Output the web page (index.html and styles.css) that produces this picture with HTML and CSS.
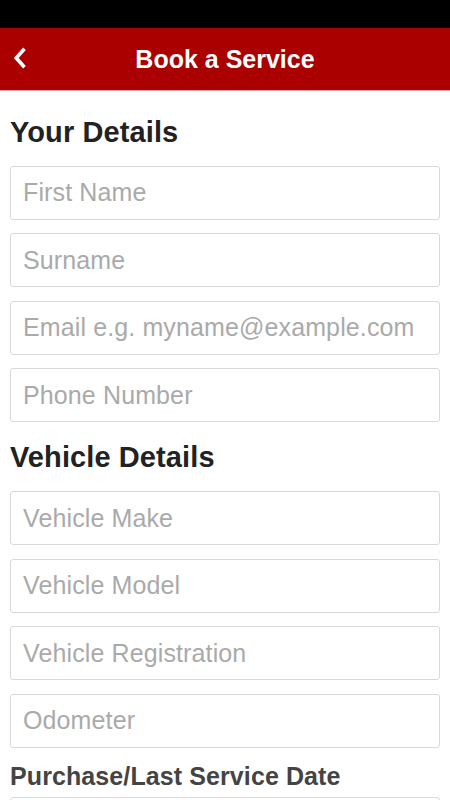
FILE: index.html
```html
<!DOCTYPE html>
<html lang="en">
<head>
<meta charset="utf-8">
<title>Book a Service</title>
<link rel="stylesheet" href="styles.css">
</head>
<body>
<div class="status-bar"></div>
<header class="app-header">
  <button class="back-btn" aria-label="Back">
    <svg width="14" height="22" viewBox="0 0 14 22"><path d="M11.5 1.8 L3.2 11 L11.5 20.2" fill="none" stroke="#fff" stroke-width="3.6" stroke-linejoin="miter"/></svg>
  </button>
  <h1 class="app-title">Book a Service</h1>
</header>
<main class="form">
  <h2 class="section-title">Your Details</h2>
  <input class="field" type="text" placeholder="First Name">
  <input class="field" type="text" placeholder="Surname">
  <input class="field" type="email" placeholder="Email e.g. myname@example.com">
  <input class="field" type="tel" placeholder="Phone Number">
  <h2 class="section-title">Vehicle Details</h2>
  <input class="field" type="text" placeholder="Vehicle Make">
  <input class="field" type="text" placeholder="Vehicle Model">
  <input class="field" type="text" placeholder="Vehicle Registration">
  <input class="field" type="text" placeholder="Odometer">
  <h3 class="label">Purchase/Last Service Date</h3>
  <input class="field" type="text" placeholder="">
</main>
</body>
</html>
```
FILE: styles.css
```css
html, body {
  margin: 0;
  padding: 0;
  background: #fff;
  font-family: "Liberation Sans", Arial, sans-serif;
  overflow: hidden;
}
.status-bar {
  height: 28px;
  background: #000;
}
.app-header {
  position: relative;
  height: 62px;
  background: #aa0000;
  border-bottom: 1px solid #d9a3a3;
  display: flex;
  align-items: center;
  justify-content: center;
}
.back-btn {
  position: absolute;
  left: 13px;
  top: 19px;
  padding: 0;
  border: 0;
  background: none;
  width: 14px;
  height: 22px;
  display: block;
}
.back-btn svg { display: block; }
.app-title {
  margin: 0;
  color: #fff;
  font-size: 25px;
  font-weight: bold;
  line-height: 30px;
}
.form {
  padding: 19px 10px 0;
  display: flex;
  flex-direction: column;
}
.section-title {
  margin: 4.5px 0 17px;
  font-size: 29px;
  line-height: 34px;
  font-weight: bold;
  color: #222;
  letter-spacing: 0.1px;
}
.label {
  margin: 1.2px 0 6.8px;
  font-size: 25px;
  line-height: 28px;
  font-weight: bold;
  color: #444;
  letter-spacing: 0.1px;
}
.field {
  box-sizing: border-box;
  width: 100%;
  height: 54px;
  margin: 0 0 13.5px;
  padding: 0 12px;
  border: 1px solid #d9d9d9;
  border-radius: 3px;
  background: #fff;
  font-family: "Liberation Sans", Arial, sans-serif;
  font-size: 25px;
  letter-spacing: 0.12px;
  color: #333;
  outline: none;
}
.field::placeholder {
  color: #aaa;
}
```
